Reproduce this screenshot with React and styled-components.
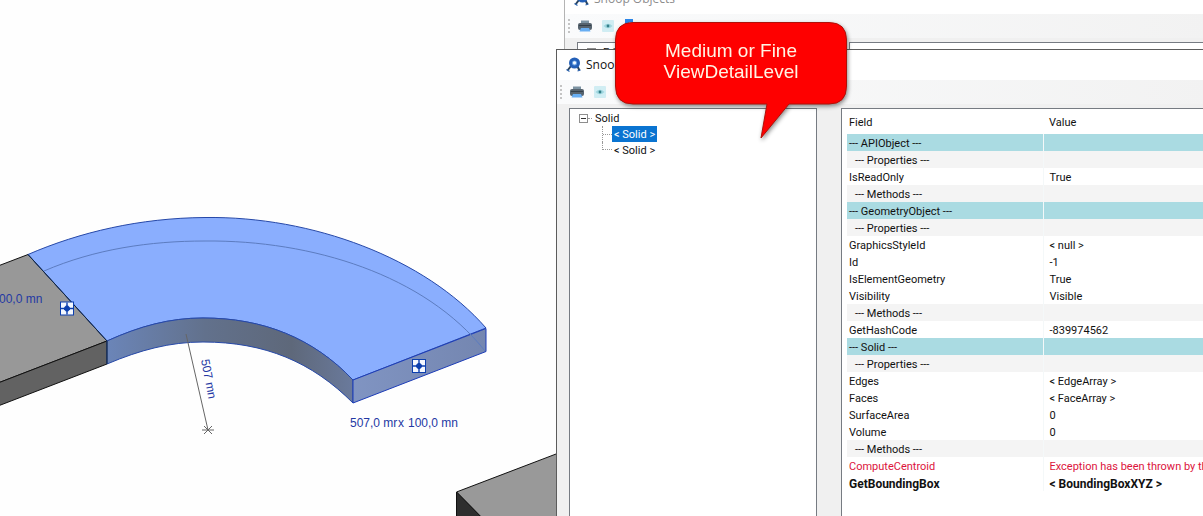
import React from "react";
import styled, { createGlobalStyle } from "styled-components";

const GlobalStyle = createGlobalStyle`
  * {
    box-sizing: border-box;
  }

  body {
    margin: 0;
    background: #fefefe;
    font-family: "Liberation Sans", Arial, sans-serif;
    color: #111;
  }
`;

const Desktop = styled.main`
  position: relative;
  height: 100vh;
  overflow: hidden;
`;

const Scene = styled.svg`
  display: block;
  width: 557px;
  height: 516px;

  text {
    font-family: "Liberation Sans", Arial, sans-serif;
    font-size: 12px;
    fill: #2438a4;
  }
`;

const Window = styled.section`
  position: absolute;
  top: ${(props) => (props.$back ? "-17px" : "49px")};
  left: ${(props) => (props.$back ? "564px" : "556px")};
  right: -8px;
  bottom: -8px;
  display: flex;
  flex-direction: column;
  background: #f0f0f0;
  border: 1px solid ${(props) => (props.$back ? "#b4b4b4" : "#5c5c5c")};
`;

const TitleBar = styled.header`
  display: flex;
  align-items: center;
  gap: 4px;
  height: 30px;
  padding-left: 9px;
  background: #fff;
`;

const Title = styled.h2`
  margin: 0;
  font-family: "Open Sans", "Noto Sans", sans-serif;
  font-size: 12px;
  font-weight: 400;
  line-height: 16px;
  color: ${(props) => (props.$back ? "#8c8c8c" : "#111")};
`;

const Toolbar = styled.div`
  display: flex;
  align-items: center;
  gap: 7px;
  height: 24px;
  padding-left: 3px;
  background: linear-gradient(90deg, #fafbfc, #f2f2f2);
`;

const Grip = styled.span`
  width: 2px;
  height: 14px;
  background: repeating-linear-gradient(#c4c4c4 0 2px, transparent 2px 4px);
`;

const ToolButton = styled.button`
  display: flex;
  width: 16px;
  height: 16px;
  padding: 0;
  border: 0;
  background: none;
`;

const Content = styled.div`
  flex: 1;
  display: flex;
  gap: 24px;
  min-height: 0;
  padding: 4px 0 0 12px;
`;

const TreePanel = styled.div`
  flex: none;
  width: 248px;
  padding: 1px 9px;
  background: #fff;
  border: 1px solid #767b82;
`;

const TreeRow = styled.div`
  display: flex;
  align-items: center;
  height: 16px;
`;

const Expander = styled.button`
  display: flex;
  width: 9px;
  height: 9px;
  padding: 0;
  border: 0;
  background: none;
`;

const Dots = styled.span`
  width: 4px;
  margin-right: 1px;
  border-top: 1px dotted #999;
`;

const Branch = styled.span`
  align-self: ${(props) => (props.$last ? "flex-start" : "stretch")};
  display: flex;
  align-items: center;
  width: 10px;
  height: ${(props) => (props.$last ? "8px" : "auto")};
  margin-left: 23px;
  border-left: 1px dotted #999;
  border-bottom: ${(props) => (props.$last ? "1px dotted #999" : "0")};

  &::after {
    content: "";
    flex: 1;
    border-top: ${(props) => (props.$last ? "0" : "1px dotted #999")};
  }
`;

const TreeLabel = styled.span`
  height: 16px;
  padding: 1px 2px 0;
  font-family: Roboto, "Liberation Sans", sans-serif;
  font-size: 11px;
  line-height: 16px;
  white-space: pre;
  color: ${(props) => (props.$selected ? "#fff" : "#111")};
  background: ${(props) => (props.$selected ? "#0a74d1" : "transparent")};
`;

const GridPanel = styled.div`
  flex: 1;
  min-width: 0;
  overflow: hidden;
  padding: 0 0 0 5px;
  background: #fff;
  border: 1px solid #767b82;
`;

const Grid = styled.table`
  width: 100%;
  table-layout: fixed;
  border-collapse: collapse;
  font-family: Roboto, "Liberation Sans", sans-serif;
  font-size: 11px;
  line-height: 14px;
`;

const HeadCell = styled.th`
  width: ${(props) => (props.$field ? "196px" : "auto")};
  height: 25px;
  padding: 3px 0 0 ${(props) => (props.$field ? "2px" : "6px")};
  font-weight: 400;
  text-align: left;
`;

const rowFill = { type: "#aadbe2", group: "#f4f4f4" };

const Row = styled.tr`
  height: 17px;
  background: ${(props) => rowFill[props.$kind] || "#fff"};
  color: ${(props) => (props.$kind === "error" ? "#dc143c" : "#111")};
  font-size: ${(props) => (props.$kind === "bold" ? "12px" : "11px")};
  font-weight: ${(props) => (props.$kind === "bold" ? 700 : 400)};
`;

const Cell = styled.td`
  height: 17px;
  padding: 3px 0 0 ${(props) => (props.$indent ? "8px" : "2px")};
  overflow: hidden;
  white-space: nowrap;

  & + & {
    padding-left: 6px;
    border-left: 1px solid #f4f8f9;
  }
`;

const Callout = styled.aside`
  position: absolute;
  top: 22px;
  left: 615px;
  width: 232px;
  height: 118px;
  filter: drop-shadow(1px 2px 2px rgba(0, 0, 0, 0.45));
`;

const Bubble = styled.svg`
  position: absolute;
  inset: 0;
`;

const CalloutText = styled.p`
  position: relative;
  margin: 0;
  padding-top: 18px;
  font-size: 19px;
  line-height: 21px;
  text-align: center;
  color: #fff4e4;
`;

const rows = [
  { field: "--- APIObject ---", kind: "type" },
  { field: "--- Properties ---", kind: "group" },
  { field: "IsReadOnly", value: "True" },
  { field: "--- Methods ---", kind: "group" },
  { field: "--- GeometryObject ---", kind: "type" },
  { field: "--- Properties ---", kind: "group" },
  { field: "GraphicsStyleId", value: "< null >" },
  { field: "Id", value: "-1" },
  { field: "IsElementGeometry", value: "True" },
  { field: "Visibility", value: "Visible" },
  { field: "--- Methods ---", kind: "group" },
  { field: "GetHashCode", value: "-839974562" },
  { field: "--- Solid ---", kind: "type" },
  { field: "--- Properties ---", kind: "group" },
  { field: "Edges", value: "< EdgeArray >" },
  { field: "Faces", value: "< FaceArray >" },
  { field: "SurfaceArea", value: "0" },
  { field: "Volume", value: "0" },
  { field: "--- Methods ---", kind: "group" },
  { field: "ComputeCentroid", value: "Exception has been thrown by the target", kind: "error" },
  { field: "GetBoundingBox", value: "< BoundingBoxXYZ >", kind: "bold" },
];

const SnoopIcon = () => (
  <svg width="16" height="16" viewBox="0 0 16 16">
    <path d="M5 9 1.500 13.500M11.500 9.500l2 4" stroke="#2b4560" strokeWidth="2" fill="none" />
    <path d="M.5 12.500l3 2M11.500 14l3-1" stroke="#2f66b0" strokeWidth="1.200" fill="none" />
    <circle cx="8.500" cy="6" r="4" fill="#6ea6e6" stroke="#2460b8" strokeWidth="3" />
    <circle cx="8.500" cy="5.800" r="1.600" fill="#f4faff" />
  </svg>
);

const PrinterIcon = () => (
  <svg width="16" height="16" viewBox="0 0 16 16">
    <path d="M4 2.500h8V6H4z" fill="#7c93a2" />
    <rect x="1" y="5" width="14" height="7" rx="2" fill="#56636e" />
    <path d="M2 7.500h12" stroke="#34404a" />
    <path d="M4 10h8l1.500 3.500h-11z" fill="#68aef2" />
  </svg>
);

const EyeIcon = () => (
  <svg width="16" height="16" viewBox="0 0 16 16">
    <rect x="2" y="2" width="12" height="12" rx="1" fill="#d0edf3" />
    <path d="M3.500 8q4.500-4.500 9 0-4.500 4.500-9 0z" fill="#9fd6df" />
    <circle cx="8" cy="8" r="1.400" fill="#35808a" />
  </svg>
);

const CopyIcon = () => (
  <svg width="16" height="16" viewBox="0 0 16 16">
    <path d="M2 1h8v10H2z" fill="#2c86e8" />
    <path d="M6 4h8v11H6z" fill="#8abcf2" />
  </svg>
);

const Handle = ({ x, y }) => (
  <g transform={`translate(${x} ${y})`}>
    <rect x="-6.500" y="-6.500" width="13" height="13" fill="#f4f8ff" stroke="#0c3fae" />
    <path d="M0-6V6M-6 0H6" stroke="#0c3fae" strokeWidth="1.400" />
    <path d="M-3-1-1-3h2l2 2v2L1 3h-2l-2-2z" fill="#0c3fae" />
  </g>
);

const Model = () => (
  <Scene viewBox="0 0 557 516" role="img" aria-label="Duct elbow in 3D view">
    <defs>
      <linearGradient id="side" x1="0" x2="1">
        <stop offset="0" stopColor="#6b85b8" />
        <stop offset=".4" stopColor="#62718c" />
        <stop offset=".75" stopColor="#5e687a" />
        <stop offset="1" stopColor="#6a7a9c" />
      </linearGradient>
      <linearGradient id="end" x1="0" x2="1">
        <stop offset="0" stopColor="#8094c2" />
        <stop offset="1" stopColor="#7486b0" />
      </linearGradient>
    </defs>

    {/* straight duct on the left */}
    <path d="M-2 266 28 254.500 107 341-2 383z" fill="#989898" stroke="#111" />
    <path d="M-2 383 107 341V364L-2 406z" fill="#626262" stroke="#111" />

    {/* elbow */}
    <path
      d="M28 254.500C80 232 140 218 205 217.500 312 216 425 258 486 328L353 380C313 338 263 318 203 318 170 318 140 326 107 341z"
      fill="#8aaefe"
      stroke="#2648a8"
    />
    <path
      d="M107 341C140 326 170 318 203 318 263 318 313 338 353 380V403C312 362 265 342 203 342 170 342 140 350 107 364z"
      fill="url(#side)"
      stroke="#2648a8"
    />
    <path d="M353 380 486 328.500V351.500L353 403z" fill="url(#end)" stroke="#1c3cb8" />
    <path d="M44 271C95 249 150 241 205 241 312 240 425 275 485 351" fill="none" stroke="#5c7cc0" />
    <path d="M28 254.500 107 341V364" fill="none" stroke="#12263c" />

    {/* radius dimension */}
    <path d="M186 334 208 430M202 430h12M204 426l8 8M212 426l-8 8" fill="none" stroke="#666" />
    <text transform="translate(201 360) rotate(79)">507 mn</text>

    <text x="-1" y="303">00,0 mn</text>
    <text x="350" y="427">507,0 mr</text>
    <text x="398" y="427">x</text>
    <text x="408" y="427">100,0 mn</text>

    <Handle x={67} y={308.5} />
    <Handle x={419} y={366} />

    {/* duct behind the window */}
    <path d="M456.500 492 560 452.500V530H494z" fill="#999" stroke="#111" />
    <path d="M456.500 492 494 530H456.500z" fill="#2e2e2e" stroke="#111" />
  </Scene>
);

const SnoopWindow = ({ back, children }) => (
  <Window $back={back}>
    <TitleBar>
      <SnoopIcon />
      <Title $back={back}>Snoop Objects</Title>
    </TitleBar>
    <Toolbar>
      <Grip />
      <ToolButton aria-label="Print">
        <PrinterIcon />
      </ToolButton>
      <ToolButton aria-label="Preview">
        <EyeIcon />
      </ToolButton>
      <ToolButton aria-label="Copy">
        <CopyIcon />
      </ToolButton>
    </Toolbar>
    <Content>{children}</Content>
  </Window>
);

const TreeRoot = ({ label }) => (
  <TreeRow>
    <Expander aria-label={`Collapse ${label}`}>
      <svg width="9" height="9" viewBox="0 0 9 9">
        <rect x=".5" y=".5" width="8" height="8" fill="#fff" stroke="#8e8e8e" />
        <path d="M2 4.500h5" stroke="#333" />
      </svg>
    </Expander>
    <Dots />
    <TreeLabel>{label}</TreeLabel>
  </TreeRow>
);

const App = () => {
  return (
    <Desktop>
      <GlobalStyle />
      <Model />
      <SnoopWindow back>
        <TreePanel>
          <TreeRoot label="Edges" />
        </TreePanel>
        <GridPanel />
      </SnoopWindow>
      <SnoopWindow>
        <TreePanel>
          <TreeRoot label="Solid" />
          <TreeRow>
            <Branch />
            <TreeLabel $selected>{"< Solid >"}</TreeLabel>
          </TreeRow>
          <TreeRow>
            <Branch $last />
            <TreeLabel>{"< Solid >"}</TreeLabel>
          </TreeRow>
        </TreePanel>
        <GridPanel>
          <Grid>
            <thead>
              <tr>
                <HeadCell $field>Field</HeadCell>
                <HeadCell>Value</HeadCell>
              </tr>
            </thead>
            <tbody>
              {rows.map((row, index) => (
                <Row key={index} $kind={row.kind}>
                  <Cell $indent={row.kind === "group"}>{row.field}</Cell>
                  <Cell>{row.value}</Cell>
                </Row>
              ))}
            </tbody>
          </Grid>
        </GridPanel>
      </SnoopWindow>
      <Callout>
        <Bubble width="232" height="118" viewBox="0 0 232 118">
          <path
            d="M18 .5H214Q231.500 .5 231.500 18V64Q231.500 82 214 82H174L146 116 152 82H18Q.5 82 .5 64V18Q.5 .5 18 .5z"
            fill="#fe0000"
            stroke="#b01008"
          />
        </Bubble>
        <CalloutText>
          Medium or Fine
          <br />
          ViewDetailLevel
        </CalloutText>
      </Callout>
    </Desktop>
  );
};

export default App;
